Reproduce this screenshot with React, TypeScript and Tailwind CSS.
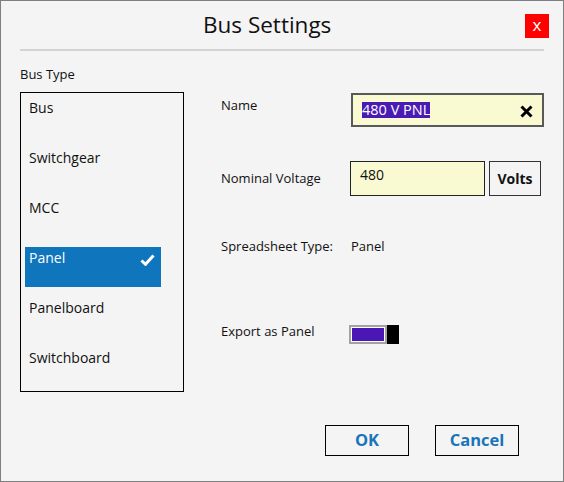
import { useState } from "react";

const busTypes = ["Bus", "Switchgear", "MCC", "Panel", "Panelboard", "Switchboard"];

export default function App() {
  const [selected, setSelected] = useState("Panel");
  const [exportAsPanel, setExportAsPanel] = useState(true);

  return (
    <div
      className="w-[564px] h-[482px] border border-[#7f7f7f] bg-[#f4f4f4] text-[#111] flex flex-col"
      style={{ fontFamily: "'Open Sans', 'Noto Sans', sans-serif" }}
    >
      {/* Header */}
      <div className="h-[48px] flex items-start">
        <div className="ml-[202px] mt-[9px] text-[22.5px] leading-[30px]">Bus Settings</div>
        <button className="ml-auto mr-[14px] mt-[13px] w-[24px] h-[24px] bg-[#ff0000] text-white text-[17px] leading-[20px] flex items-center justify-center pb-[2px]">
          x
        </button>
      </div>
      <div className="ml-[19px] w-[524px] h-[2px] bg-[#d3d3d3]" />

      {/* Body */}
      <div className="flex items-start">
        {/* Bus type list */}
        <div className="pl-[19px] flex flex-col">
          <div className="mt-[14px] text-[13px] leading-[18px]">Bus Type</div>
          <div className="mt-[9px] w-[164px] h-[300px] border border-black p-[4px] flex flex-col gap-[10px]">
            {busTypes.map((t) => (
              <div
                key={t}
                onClick={() => setSelected(t)}
                className={
                  selected === t
                    ? "w-[136px] h-[40px] pl-[4px] pr-[6px] pt-[1px] flex items-start justify-between bg-[#0f75bd] text-white text-[14px] leading-[20px]"
                    : "w-[136px] h-[40px] pl-[4px] pr-[6px] pt-[1px] flex items-start justify-between text-[14px] leading-[20px]"
                }
              >
                <span>{t}</span>
                {selected === t && (
                  <svg width="15" height="12" viewBox="0 0 15 12" className="mt-[6px]">
                    <path d="M1.5 6.5 L5.5 10.3 L13.5 1.5" fill="none" stroke="white" strokeWidth="3" />
                  </svg>
                )}
              </div>
            ))}
          </div>
        </div>

        {/* Properties */}
        <div className="ml-[37px] mt-[42px] flex flex-col text-[13px] leading-[18px]">
          <div className="flex items-start">
            <div className="w-[130px] pt-[3px]">Name</div>
            <div className="w-[193px] h-[34px] border-2 border-[#595959] bg-[#fafad2] flex items-center pl-[9px] pr-[9px]">
              <span className="inline-block h-[16px] leading-[16px] text-[14.5px] bg-[#4a1ab4] text-white">
                480 V PNL
              </span>
              <svg width="13" height="13" viewBox="0 0 13 13" className="ml-auto mt-[2px]">
                <path d="M1.5 1.5 L11.5 11.5 M11.5 1.5 L1.5 11.5" stroke="black" strokeWidth="3" fill="none" />
              </svg>
            </div>
          </div>

          <div className="mt-[34px] flex items-start">
            <div className="w-[129px] pt-[8px]">Nominal Voltage</div>
            <div className="w-[135px] h-[35px] border border-[#222] bg-[#fafad2] pl-[9px] pt-[3px] text-[14px] leading-[20px]">
              480
            </div>
            <button className="ml-[4px] w-[52px] h-[35px] border border-[#333] bg-[#f4f4f4] font-bold text-[14px] flex items-center justify-center">
              Volts
            </button>
          </div>

          <div className="mt-[41px] flex items-start">
            <div className="w-[130px]">Spreadsheet Type:</div>
            <div>Panel</div>
          </div>

          <div className="mt-[67px] flex items-start">
            <div className="w-[128px]">Export as Panel</div>
            <button onClick={() => setExportAsPanel(!exportAsPanel)} className="mt-[3px] flex">
              <div className="w-[38px] h-[19px] border-2 border-[#a3a3a3] bg-white p-[1px] flex">
                <div className={exportAsPanel ? "flex-1 bg-[#4a17b4]" : "flex-1 bg-white"} />
              </div>
              <div className="w-[12px] h-[19px] bg-black" />
            </button>
          </div>
        </div>
      </div>

      {/* Footer */}
      <div className="mt-[33px] flex justify-end gap-[26px] pr-[44px]">
        <button className="w-[84px] h-[31px] border border-black text-[#1a74ba] font-bold text-[16.5px] flex items-center justify-center">
          OK
        </button>
        <button className="w-[84px] h-[31px] border border-black text-[#1a74ba] font-bold text-[16.5px] flex items-center justify-center">
          Cancel
        </button>
      </div>
    </div>
  );
}
